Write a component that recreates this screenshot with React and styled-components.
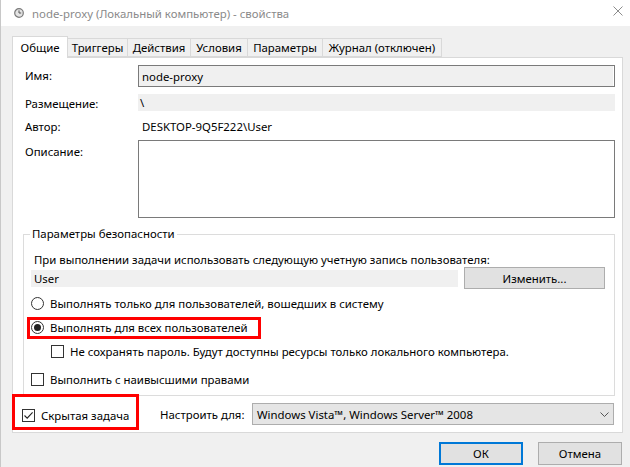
import styled, { createGlobalStyle } from "styled-components";

const GlobalStyle = createGlobalStyle`
  * { box-sizing: border-box; }
  body {
    margin: 0;
    background: #f0f0f0;
    font-family: "Noto Sans", "Segoe UI", sans-serif;
    font-size: 11.4px;
    color: #000;
  }
`

const tabs = [
  { title: "Общие", width: 56 },
  { title: "Триггеры", width: 61 },
  { title: "Действия", width: 64 },
  { title: "Условия", width: 58 },
  { title: "Параметры", width: 76 },
  { title: "Журнал (отключен)", width: 120 },
];

function ClockIcon() {
  return (
    <svg width="10" height="10" viewBox="0 0 10 10">
      <circle cx="5" cy="5" r="4.3" fill="#e4e4e4" stroke="#7a7a7a" strokeWidth="1.2" />
      <path d="M5 2.4V5h2.2" fill="none" stroke="#555" strokeWidth="1" />
    </svg>
  );
}

function CloseIcon() {
  return (
    <svg width="10" height="10" viewBox="0 0 10 10">
      <path d="M0.5 0.5L9.5 9.5M9.5 0.5L0.5 9.5" stroke="#8c8c8c" strokeWidth="1" />
    </svg>
  );
}

function Chevron() {
  return (
    <svg width="9" height="5" viewBox="0 0 9 5">
      <path d="M0.5 0.5L4.5 4.5L8.5 0.5" fill="none" stroke="#555" strokeWidth="1" />
    </svg>
  );
}

function Checkbox({ checked }) {
  return (
    <StyledBox>
      {checked && (
        <svg width="11" height="11" viewBox="0 0 11 11">
          <path d="M1.5 5.5L4.2 8.2L9.6 2.4" fill="none" stroke="#222" strokeWidth="1.1" />
        </svg>
      )}
    </StyledBox>
  );
}

function App() {
  return (
    <>
      <GlobalStyle />
      <StyledWindow>
        <StyledTitleBar>
          <ClockIcon />
          <StyledTitle>node-proxy (Локальный компьютер) - свойства</StyledTitle>
          <StyledClose><CloseIcon /></StyledClose>
        </StyledTitleBar>

        <StyledBody>
          <StyledTabStrip>
            {tabs.map((t, i) => (
              <StyledTab key={t.title} $active={i === 0} $width={t.width}>
                {t.title}
              </StyledTab>
            ))}
          </StyledTabStrip>

          <StyledPanel>
            <StyledInfoGrid>
              <StyledLabel>Имя:</StyledLabel>
              <StyledTextBox>node-proxy</StyledTextBox>

              <StyledLabel $shift={2}>Размещение:</StyledLabel>
              <StyledReadOnly>\</StyledReadOnly>

              <StyledLabel>Автор:</StyledLabel>
              <StyledPlainValue>DESKTOP-9Q5F222\User</StyledPlainValue>

              <StyledLabel $top>Описание:</StyledLabel>
              <StyledTextArea />
            </StyledInfoGrid>

            <StyledGroup>
              <StyledLegend>Параметры безопасности</StyledLegend>
              <StyledHint>При выполнении задачи использовать следующую учетную запись пользователя:</StyledHint>
              <StyledUserRow>
                <StyledUserField>User</StyledUserField>
                <StyledButton $width={141}>Изменить...</StyledButton>
              </StyledUserRow>

              <StyledOption $mt={6}>
                <StyledRadio />
                Выполнять только для пользователей, вошедших в систему
              </StyledOption>
              <StyledOption $mt={8}>
                <StyledHighlight $left={-4} $top={-2} $bottom={-4} $width={234} />
                <StyledRadio $checked />
                Выполнять для всех пользователей
              </StyledOption>
              <StyledOption $mt={8} $indent={20}>
                <Checkbox />
                Не сохранять пароль. Будут доступны ресурсы только локального компьютера.
              </StyledOption>
              <StyledOption $mt={12}>
                <Checkbox />
                Выполнить с наивысшими правами
              </StyledOption>
            </StyledGroup>

            <StyledBottomRow>
              <StyledHiddenTask>
                <StyledHighlight $left={-10} $top={-9} $bottom={-5} $width={127} />
                <Checkbox checked />
                Скрытая задача
              </StyledHiddenTask>
              <StyledConfigLabel>Настроить для:</StyledConfigLabel>
              <StyledCombo>
                Windows Vista™, Windows Server™ 2008
                <Chevron />
              </StyledCombo>
            </StyledBottomRow>
          </StyledPanel>

          <StyledFooter>
            <StyledButton $width={84} $height={23} $primary>ОК</StyledButton>
            <StyledButton $width={84} $height={23}>Отмена</StyledButton>
          </StyledFooter>
        </StyledBody>
      </StyledWindow>
    </>
  );
}

const StyledWindow = styled.div`
  width: 630px;
  height: 467px;
  overflow: hidden;
  background: #f0f0f0;
  border-left: 1px solid #c8c8c8;
`

const StyledTitleBar = styled.div`
  display: flex;
  align-items: center;
  height: 26px;
  padding-left: 13px;
  background: #fff;
`

const StyledTitle = styled.span`
  margin-left: 8px;
  color: #8a8a8a;
  font-size: 11.4px;
`

const StyledClose = styled.span`
  display: flex;
  margin-left: auto;
  margin-right: 7px;
  margin-top: -4px;
`

const StyledBody = styled.div`
  padding: 10px 7px 0 11px;
`

const StyledTabStrip = styled.div`
  display: flex;
  align-items: flex-end;
  height: 21px;
  position: relative;
  z-index: 1;
`

const StyledTab = styled.div`
  display: flex;
  align-items: center;
  justify-content: center;
  width: ${({ $width }) => $width}px;
  height: ${({ $active }) => ($active ? 22 : 19)}px;
  margin-bottom: ${({ $active }) => ($active ? -1 : 0)}px;
  background: ${({ $active }) => ($active ? "#fff" : "#f0f0f0")};
  border: 1px solid #d9d9d9;
  border-bottom: ${({ $active }) => ($active ? "none" : "1px solid #d9d9d9")};
  margin-left: ${({ $active }) => ($active ? 0 : -1)}px;
  white-space: nowrap;
`

const StyledPanel = styled.div`
  height: 376px;
  padding: 7px 7px 6px 12px;
  background: #fff;
  border: 1px solid #d9d9d9;
`

const StyledInfoGrid = styled.div`
  display: grid;
  grid-template-columns: 113px 1fr;
  grid-template-rows: 22px 17px 17px 76px;
  row-gap: 7px;

  & > :nth-child(7),
  & > :nth-child(8) {
    margin-top: -2px;
  }
`

const StyledLabel = styled.div`
  display: flex;
  align-items: ${({ $top }) => ($top ? "flex-start" : "center")};
  padding-top: ${({ $top, $shift }) => ($top ? 4 : $shift || 0)}px;
  line-height: 16px;
`

const StyledTextBox = styled.div`
  display: flex;
  align-items: center;
  padding-left: 3px;
  background: #f0f0f0;
  border: 1px solid #7a7a7a;
  box-shadow: inset -1px 0 0 #fff;
`

const StyledReadOnly = styled.div`
  display: flex;
  align-items: center;
  padding-left: 2px;
  background: #f0f0f0;
`

const StyledPlainValue = styled.div`
  display: flex;
  align-items: center;
  padding-left: 4px;
`

const StyledTextArea = styled.div`
  background: #fff;
  border: 1px solid #7a7a7a;
`

const StyledGroup = styled.fieldset`
  margin: 8px 0 0 -2px;
  padding: 0 9px 8px 7px;
  border: 1px solid #dcdcdc;
  min-width: 0;
`

const StyledLegend = styled.legend`
  padding: 0 2px;
  margin-left: -1px;
  line-height: 16px;
`

const StyledHint = styled.div`
  margin-top: 10px;
  padding-left: 3px;
  line-height: 16px;
`

const StyledUserRow = styled.div`
  display: flex;
  align-items: center;
  gap: 6px;
  height: 22px;
  margin-top: -1px;
`

const StyledUserField = styled.div`
  display: flex;
  align-items: center;
  flex: 1;
  height: 17px;
  padding-left: 3px;
  background: #f0f0f0;
`

const StyledButton = styled.div`
  display: flex;
  align-items: center;
  justify-content: center;
  width: ${({ $width }) => $width}px;
  height: ${({ $height }) => $height || 22}px;
  background: #e1e1e1;
  border: ${({ $primary }) => ($primary ? "2px solid #0078d7" : "1px solid #adadad")};
`

const StyledOption = styled.div`
  position: relative;
  display: flex;
  align-items: center;
  gap: 6px;
  height: 16px;
  margin-top: ${({ $mt }) => $mt}px;
  padding-left: ${({ $indent }) => $indent || 0}px;
  white-space: nowrap;
`

const StyledRadio = styled.span`
  position: relative;
  flex: none;
  width: 13px;
  height: 13px;
  border: 1px solid #333;
  border-radius: 50%;
  background: #fff;

  &::after {
    content: "";
    display: ${({ $checked }) => ($checked ? "block" : "none")};
    position: absolute;
    top: 2px;
    left: 2px;
    width: 7px;
    height: 7px;
    border-radius: 50%;
    background: #222;
  }
`

const StyledBox = styled.span`
  display: flex;
  align-items: center;
  justify-content: center;
  flex: none;
  width: 13px;
  height: 13px;
  border: 1px solid #333;
  background: #fff;
`

const StyledHighlight = styled.span`
  position: absolute;
  left: ${({ $left }) => $left}px;
  top: ${({ $top }) => $top}px;
  bottom: ${({ $bottom }) => $bottom}px;
  width: ${({ $width }) => $width}px;
  border: 3px solid #f00;
  pointer-events: none;
`

const StyledBottomRow = styled.div`
  display: flex;
  align-items: center;
  height: 22px;
  margin: 7px 1px 0 -3px;
`

const StyledHiddenTask = styled.div`
  position: relative;
  display: flex;
  align-items: center;
  gap: 6px;
  width: 138px;
  height: 22px;
  padding-top: 2px;
`

const StyledConfigLabel = styled.div`
  width: 92px;
`

const StyledCombo = styled.div`
  display: flex;
  align-items: center;
  justify-content: space-between;
  flex: 1;
  height: 22px;
  padding: 0 4px 0 4px;
  background: #e5e5e5;
  border: 1px solid #adadad;
`

const StyledFooter = styled.div`
  display: flex;
  justify-content: flex-end;
  gap: 15px;
  margin-top: 9px;
  padding-right: 1px;
`

export default App;
